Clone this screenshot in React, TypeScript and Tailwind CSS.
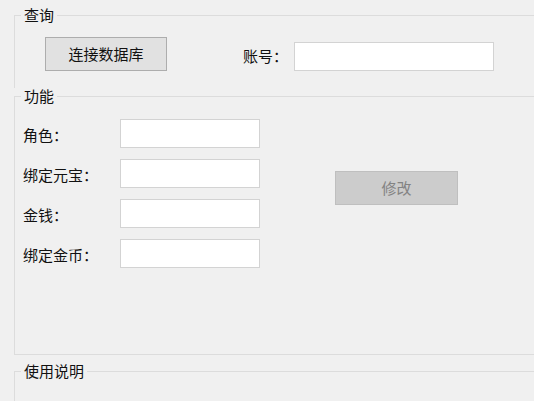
const font = "font-['Noto_Sans_CJK_SC','Microsoft_YaHei',sans-serif]";

function GroupTitle({ text }: { text: string }) {
  return (
    <span className="absolute left-[6px] top-[-11px] bg-[#f0f0f0] px-[3px] text-[15px] leading-[20px] text-[#111]">
      {text}
    </span>
  );
}

function Field({ label }: { label: string }) {
  return (
    <div className="flex h-[29px] items-center">
      <span className="w-[97px] pt-[3px] text-[15px] leading-[20px] text-[#111]">{label}</span>
      <input className="h-[29px] w-[140px] border border-[#d3d3d3] bg-white outline-none" />
    </div>
  );
}

export default function App() {
  return (
    <div className={`h-[401px] w-[534px] overflow-hidden bg-[#f0f0f0] pl-[14px] pt-[15px] ${font}`}>
      {/* 查询 */}
      <div className="relative h-[73px] w-[600px] border-l border-t border-[#dcdcdc]">
        <GroupTitle text="查询" />
        <div className="flex h-full items-end pb-[17px] pl-[30px]">
          <button className="h-[34px] w-[122px] border border-[#adadad] bg-[#e1e1e1] text-[15px] text-[#111]">
            连接数据库
          </button>
          <span className="ml-[76px] flex h-[29px] w-[51px] items-center text-[15px] text-[#111]">账号：</span>
          <input className="h-[29px] w-[200px] border border-[#d3d3d3] bg-white outline-none" />
        </div>
      </div>

      {/* 功能 */}
      <div className="relative mt-[8px] h-[259px] w-[600px] border border-[#dcdcdc]">
        <GroupTitle text="功能" />
        <div className="flex items-start pl-[8px] pt-[22px]">
          <div className="flex flex-col gap-[11px]">
            <Field label="角色：" />
            <Field label="绑定元宝：" />
            <Field label="金钱：" />
            <Field label="绑定金币：" />
          </div>
          <button
            disabled
            className="ml-[75px] mt-[52px] h-[34px] w-[123px] border border-[#bfbfbf] bg-[#cccccc] text-[15px] text-[#838383]"
          >
            修改
          </button>
        </div>
      </div>

      {/* 使用说明 */}
      <div className="relative mt-[16px] h-[80px] w-[600px] border-l border-t border-[#dcdcdc]">
        <GroupTitle text="使用说明" />
      </div>
    </div>
  );
}
